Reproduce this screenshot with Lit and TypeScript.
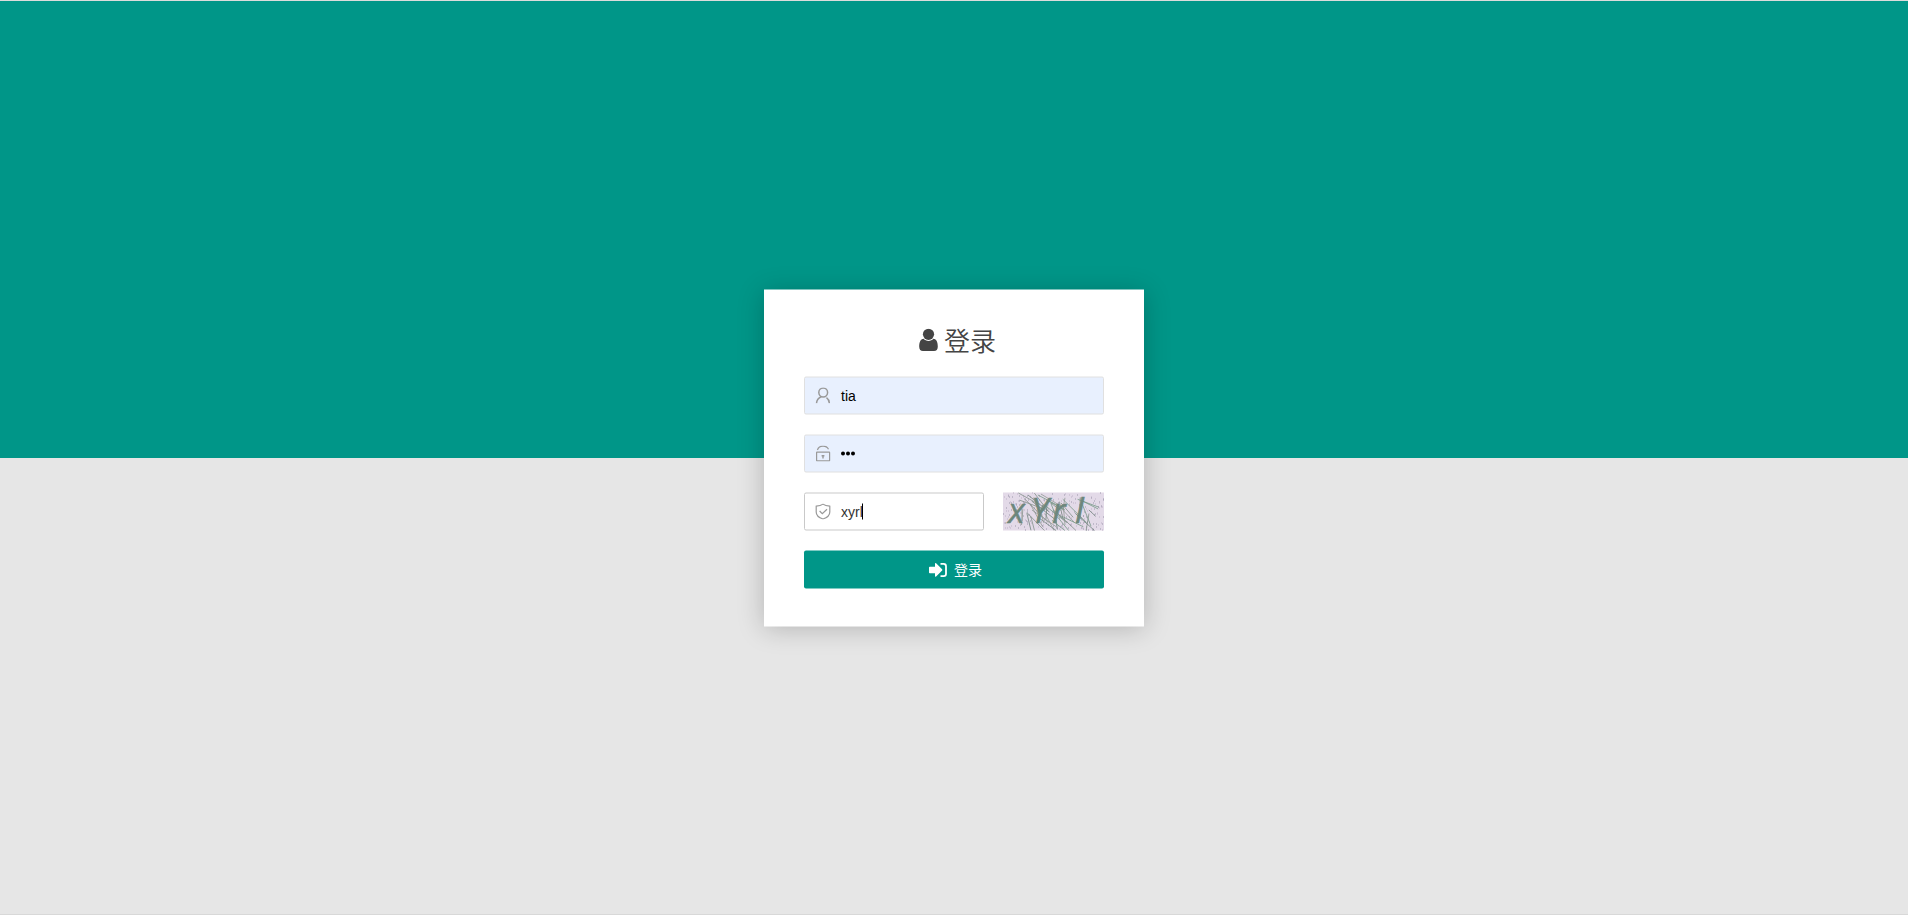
import { html, css, svg, LitElement } from 'lit';
import { customElement, property, state } from 'lit/decorators.js';

const LINE_COLORS = ['#6b7f78', '#6f9480', '#7d8c84', '#8d9690'];

// small seeded generator, keeps the captcha noise stable between renders
function createRandom(seed: number) {
  return () => {
    seed = (seed * 1664525 + 1013904223) % 4294967296;
    return seed / 4294967296;
  };
}

@customElement('captcha-image')
export class CaptchaImageElement extends LitElement {
  static styles = css`
    :host {
      display: block;
      width: 101px;
      height: 38px;
    }

    svg {
      display: block;
      overflow: visible;
    }

    .code {
      font: italic 500 35px 'Open Sans', 'Liberation Sans', sans-serif;
      fill: #6d877d;
      stroke: #6d877d;
      stroke-width: 0.4;
    }
  `;

  @property({ type: String })
  code = '';

  private _positions = [5, 28, 49, 72];

  render() {
    const random = createRandom(20);
    const dots = Array.from({ length: 260 }, () => ({
      x: Math.floor(random() * 101),
      y: Math.floor(random() * 38),
      color: random() > 0.5 ? '#9c96aa' : '#bfb2c8',
    }));
    const lines = Array.from({ length: 44 }, (_, i) => {
      const x = 14 + random() * 72;
      const y = random() * 28;
      return {
        x,
        y,
        x2: Math.min(101, x + (random() - 0.1) * 30),
        y2: Math.min(38, y + 6 + random() * 18),
        color: LINE_COLORS[i % LINE_COLORS.length],
      };
    });

    return html`
      <svg width="101" height="38" viewBox="0 0 101 38">
        <rect width="101" height="38" fill="#e3dae8" />
        ${dots.map((d) => svg`<rect x=${d.x} y=${d.y} width="1" height="1" fill=${d.color} />`)}
        ${lines.map((l) => svg`
          <line x1=${l.x} y1=${l.y} x2=${l.x2} y2=${l.y2} stroke=${l.color} stroke-width="0.75" />
        `)}
        ${[...this.code].map((c, i) => svg`
          <text class="code" x=${this._positions[i]} y="30.5">${c}</text>
        `)}
      </svg>
    `;
  }
}

@customElement('login-field')
export class LoginFieldElement extends LitElement {
  static styles = css`
    :host {
      display: block;
    }

    .field {
      display: flex;
      align-items: center;
      box-sizing: border-box;
      height: 38px;
      padding-left: 10px;
      border: 1px solid #e0e0e0;
      border-radius: 2px;
      background: #fff;
      font: 14px 'Liberation Sans', sans-serif;
      color: #333;
    }

    .filled {
      background: #e8f0fe;
      color: #000;
    }

    .active {
      border-color: #c9c9c9;
    }

    .icon {
      flex: none;
      width: 16px;
      height: 16px;
      margin-right: 10px;
      fill: none;
      stroke: #999;
      stroke-width: 1.2;
    }

    .caret {
      width: 1px;
      height: 16px;
      margin-left: -1px;
      background: #000;
    }

    .dots {
      display: flex;
      gap: 1px;
    }

    .dot {
      width: 4px;
      height: 4px;
      border-radius: 50%;
      background: #000;
    }
  `;

  @property({ type: String })
  icon: 'username' | 'password' | 'vercode' = 'username';

  @property({ type: String })
  value = '';

  @property({ type: Boolean })
  filled = false;

  @property({ type: Boolean })
  active = false;

  render() {
    return html`
      <div class=${`field ${this.filled ? 'filled' : ''} ${this.active ? 'active' : ''}`}>
        <svg class="icon" viewBox="0 0 16 16">${this._renderIcon()}</svg>
        ${this.icon === 'password'
          ? html`<span class="dots">${[...this.value].map(() => html`<i class="dot"></i>`)}</span>`
          : html`<span>${this.value}</span>`}
        ${this.active ? html`<i class="caret"></i>` : ''}
      </div>
    `;
  }

  private _renderIcon() {
    switch (this.icon) {
      case 'password':
        return svg`
          <rect x="1.6" y="6.6" width="13" height="8.8" rx=".4" />
          <path d="M2.4 4.5C3.3 2 5.4.7 8 .7c2.600 0 4.500 1.100 5.500 3.100" />
          <path d="M8 9.500V13M6.600 10.200h2.800" stroke-width="1.400" />
        `;
      case 'vercode':
        return svg`
          <path d="M8 .6C6.200 2 4 2.500 1.200 2.700V8.500c0 3.300 2.600 5.700 6.800 7 4.200-1.300 6.800-3.700 6.800-7V2.700C12 2.500 9.800 2 8 .6z" />
          <path d="M4.600 7.500l2.700 2.700 4.700-4.500" />
        `;
      default:
        return svg`
          <circle cx="8.200" cy="5" r="4.400" stroke-width="1.500" />
          <path d="M1.500 15.700c.3-3.300 2-5.300 4.700-6.400M11.500 10.100c1.700 1.200 2.700 3 2.900 5.600" stroke-width="1.500" />
        `;
    }
  }
}

@customElement('app-root')
export class AppRootElement extends LitElement {
  static styles = css`
    :host {
      display: flex;
      flex-direction: column;
      box-sizing: border-box;
      height: 919px;
      border-top: 1px solid #dcdcdc;
      background: #fff;
      overflow: hidden;
    }

    .page {
      display: flex;
      justify-content: center;
      align-items: flex-start;
      box-sizing: border-box;
      height: 914px;
      padding-top: 288px;
      border-bottom: 1px solid #d8d8d8;
      background: linear-gradient(#009688 457px, #e6e6e6 457px);
    }

    .card {
      display: flex;
      flex-direction: column;
      gap: 20px;
      box-sizing: border-box;
      width: 380px;
      height: 337px;
      padding: 27px 40px 0;
      background: #fff;
      box-shadow: 0 2px 25px rgba(0, 0, 0, 0.22);
      /* the card is centred on a half pixel */
      transform: translateY(0.5px);
    }

    .title {
      display: flex;
      align-items: center;
      justify-content: center;
      gap: 6px;
      height: 47px;
      margin: 0 0 -7px;
      padding-left: 7px;
      font: 350 26px 'Noto Sans CJK SC', sans-serif;
      color: #444;
    }

    .title span {
      padding-bottom: 3px;
    }

    .user {
      width: 19px;
      height: 23px;
      fill: #444;
    }

    .row {
      display: grid;
      grid-template-columns: 180px 101px;
      justify-content: space-between;
    }

    .submit {
      display: flex;
      align-items: center;
      justify-content: center;
      gap: 7px;
      height: 38px;
      padding: 0 0 0 3px;
      border: none;
      border-radius: 2px;
      background: #009688;
      color: #fff;
      font: 400 14px 'Noto Sans CJK SC', sans-serif;
      cursor: pointer;
    }

    .submit span {
      padding-bottom: 2px;
    }

    .sign-in {
      width: 18px;
      height: 15px;
      fill: #fff;
    }
  `;

  @state()
  private _username = 'tia';

  @state()
  private _password = '123';

  @state()
  private _captcha = 'xyrl';

  render() {
    return html`
      <div class="page">
        <div class="card">
          <h2 class="title">
            <svg class="user" viewBox="0 0 19 23">
              <circle cx="9.500" cy="5.800" r="5.600" />
              <path d="M4.600 10.300C1.300 10.700.2 14 .2 18.300.2 21 1.600 22.600 4 22.600h11c2.400 0 3.800-1.600 3.800-4.300 0-4.300-1.100-7.600-4.400-8C13.200 11.600 11.500 12.500 9.500 12.500s-3.700-.9-4.900-2.200z" />
            </svg>
            <span>登录</span>
          </h2>
          <login-field icon="username" .value=${this._username} filled></login-field>
          <login-field icon="password" .value=${this._password} filled></login-field>
          <div class="row">
            <login-field icon="vercode" .value=${this._captcha} active></login-field>
            <captcha-image code="xYrl"></captcha-image>
          </div>
          <button class="submit">
            <svg class="sign-in" viewBox="0 0 18 15">
              <path d="M.8 4.200h5.200V1.300c0-.7.6-.9 1.100-.5l6 6c.4.4.4.9 0 1.300l-6 6c-.5.4-1.100.2-1.100-.5V10.700H.8c-.5 0-.8-.3-.8-.8V5c0-.5.3-.8.800-.8z" />
              <path d="M11.500 .5h3.200A3.200 3.200 0 0 1 17.900 3.700v7.600a3.200 3.200 0 0 1-3.200 3.200h-3.200v-1.700h3a1.600 1.600 0 0 0 1.600-1.600V3.800a1.600 1.600 0 0 0-1.600-1.600h-3z" />
            </svg>
            <span>登录</span>
          </button>
        </div>
      </div>
    `;
  }
}

declare global {
  interface HTMLElementTagNameMap {
    'app-root': AppRootElement;
    'login-field': LoginFieldElement;
    'captcha-image': CaptchaImageElement;
  }
}
